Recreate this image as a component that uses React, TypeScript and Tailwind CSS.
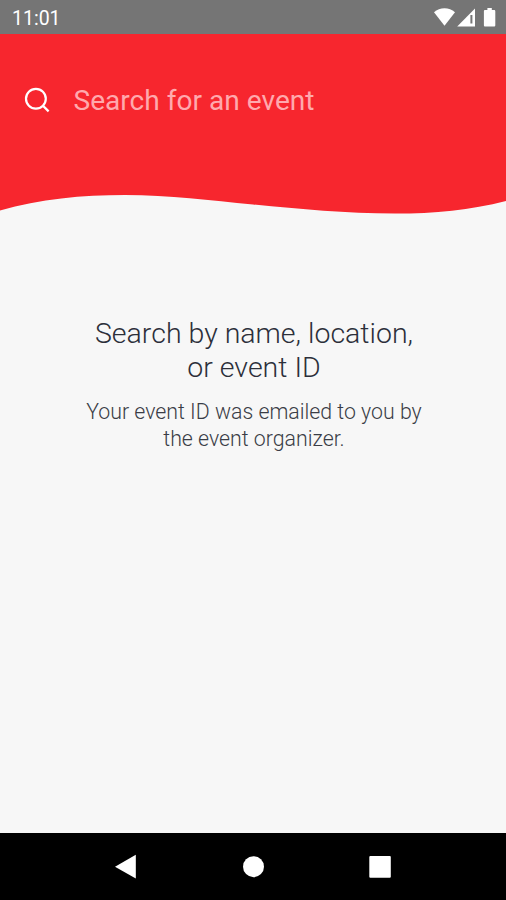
import React from 'react'

const StatusBar = () => {
  return (
    <div className="w-full h-[34px] bg-[#757575] flex items-center justify-between pl-3 pr-2">
      <span className="text-white text-[19.5px] leading-none pt-1">11:01</span>
      <svg width="64" height="22" viewBox="0 0 64 22" fill="#fff" className="shrink-0">
        {/* wifi */}
        <path d="M0 6.2C3 3.6 6.6 2.2 10.5 2.2S18 3.6 21 6.2L10.5 19.8z" />
        {/* signal */}
        <path d="M41 2.6V20.6H23.2z" />
        <path d="M36.4 9H38.4V17.5H36.4z" fill="#757575" />
        {/* battery */}
        <path d="M53.4 2h4.4v2h2.2c.8 0 1.3.5 1.3 1.3v14c0 .8-.5 1.3-1.3 1.3h-8.8c-.8 0-1.3-.5-1.3-1.3V5.3c0-.8.5-1.3 1.3-1.3h2.2z" />
      </svg>
    </div>
  )
}

const Header = () => {
  return (
    <div className="w-full flex flex-col">
      <div className="w-full h-[156px] bg-[#f7262e] pl-6 pt-[46px]">
        <div className="flex items-center h-10">
          <svg width="26" height="26" viewBox="0 0 26 26" fill="none" stroke="#fff" strokeWidth="2.2">
            <circle cx="11.9" cy="11.7" r="9.9" />
            <path d="M18.8 18.6L24.6 24.4" />
          </svg>
          <span className="ml-[23.5px] mt-0.5 text-[28.1px] leading-10 text-[#ffa9ad] whitespace-nowrap">
            Search for an event
          </span>
        </div>
      </div>
      {/* wavy bottom edge */}
      <svg width="506" height="28" viewBox="0 190 506 28" className="block">
        <path
          d="M0 190V210.5C40 199 82 195 125 195C170 195 210 200.5 253 204.5C300 209 345 213.6 395 213.6C435 213.6 470 210 506 201V190z"
          fill="#f7262e"
        />
      </svg>
    </div>
  )
}

const NavBar = () => {
  return (
    <div className="w-full h-[67px] bg-black">
      <svg width="506" height="67" viewBox="0 0 506 67" fill="#fff">
        <path d="M115 33.7L135.8 21.8V45.6z" />
        <circle cx="253.5" cy="33.7" r="10.5" />
        <rect x="369.3" y="23" width="21.5" height="21.7" rx="1" />
      </svg>
    </div>
  )
}

const App = () => {
  return (
    <div className="w-[506px] h-[900px] bg-[#f7f7f7] flex flex-col overflow-hidden font-['Roboto',sans-serif]">
      <StatusBar />
      <Header />
      <div className="flex-1 flex flex-col items-center text-center pt-[99px] pl-0.5">
        <h1 className="text-[28.5px] leading-[34px] font-light text-[#2c2f3a] whitespace-nowrap">
          Search by name, location,
          <br />
          or event ID
        </h1>
        <p className="mt-[13px] text-[21.3px] leading-[27px] font-light text-[#3a3d46] whitespace-nowrap">
          Your event ID was emailed to you by
          <br />
          the event organizer.
        </p>
      </div>
      <NavBar />
    </div>
  )
}

export default App
